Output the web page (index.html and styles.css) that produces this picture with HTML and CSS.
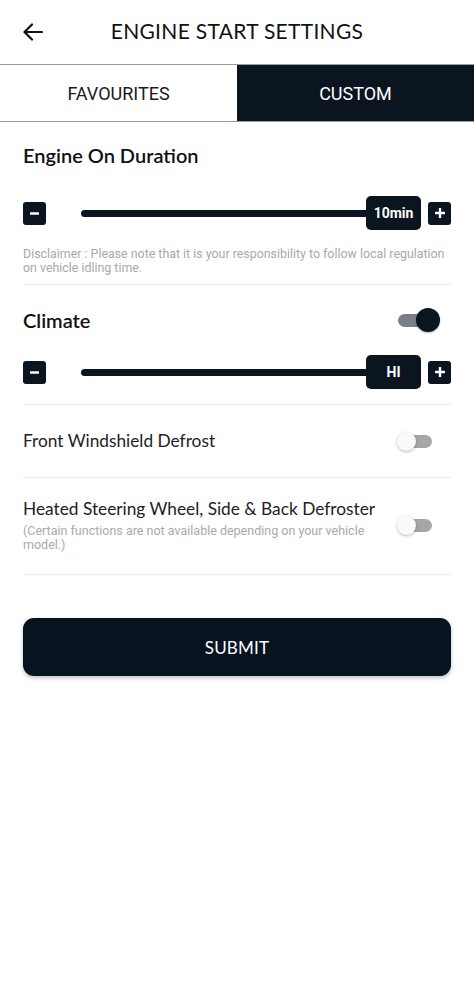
FILE: index.html
```html
<!DOCTYPE html>
<html lang="en">
<head>
<meta charset="utf-8">
<title>Engine Start Settings</title>
<link rel="stylesheet" href="styles.css">
</head>
<body>
<div class="screen">
  <header class="topbar">
    <button class="back" aria-label="Back">
      <svg width="20" height="18" viewBox="0 0 20 18" fill="none" stroke="#0a1520" stroke-width="2.2" stroke-linecap="round" stroke-linejoin="round"><path d="M19 9H2M9 1.5L1.5 9 9 16.5"/></svg>
    </button>
    <h1 class="title">ENGINE START SETTINGS</h1>
    <span></span>
  </header>

  <nav class="tabs">
    <div class="tab">FAVOURITES</div>
    <div class="tab active">CUSTOM</div>
  </nav>

  <main class="content">
    <section class="block engine">
      <h2 class="heading">Engine On Duration</h2>
      <div class="slider">
        <button class="step">
          <svg width="9" height="9" viewBox="0 0 9 9"><rect x="0" y="3.3" width="9" height="2.4" rx="0.5" fill="#fff"/></svg>
        </button>
        <div class="track-area">
          <div class="track"></div>
          <div class="thumb">10min</div>
        </div>
        <button class="step">
          <svg width="10" height="10" viewBox="0 0 10 10"><rect x="0" y="3.8" width="10" height="2.4" rx="0.5" fill="#fff"/><rect x="3.8" y="0" width="2.4" height="10" rx="0.5" fill="#fff"/></svg>
        </button>
      </div>
      <p class="note">Disclaimer : Please note that it is your responsibility to follow local regulation on vehicle idling time.</p>
    </section>

    <section class="block climate">
      <div class="row-head">
        <h2 class="heading">Climate</h2>
        <span class="toggle on"><span class="knob"></span></span>
      </div>
      <div class="slider">
        <button class="step">
          <svg width="9" height="9" viewBox="0 0 9 9"><rect x="0" y="3.3" width="9" height="2.4" rx="0.5" fill="#fff"/></svg>
        </button>
        <div class="track-area">
          <div class="track"></div>
          <div class="thumb">HI</div>
        </div>
        <button class="step">
          <svg width="10" height="10" viewBox="0 0 10 10"><rect x="0" y="3.8" width="10" height="2.4" rx="0.5" fill="#fff"/><rect x="3.8" y="0" width="2.4" height="10" rx="0.5" fill="#fff"/></svg>
        </button>
      </div>
    </section>

    <section class="option windshield">
      <div class="label">Front Windshield Defrost</div>
      <span class="toggle off"><span class="knob"></span></span>
    </section>

    <section class="option heated">
      <div class="text">
        <div class="label">Heated Steering Wheel, Side &amp; Back Defroster</div>
        <div class="sub">(Certain functions are not available depending on your vehicle model.)</div>
      </div>
      <span class="toggle off"><span class="knob"></span></span>
    </section>

    <button class="submit">SUBMIT</button>
  </main>
</div>
</body>
</html>
```

FILE: styles.css
```css
* { box-sizing: border-box; }
html, body { margin: 0; padding: 0; background: #fff; }
body { font-family: Roboto, "Liberation Sans", sans-serif; color: #0a1520; }
button { font: inherit; border: 0; padding: 0; cursor: pointer; }

.screen { width: 474px; min-height: 1001px; background: #fff; }

.topbar {
  height: 64px;
  display: grid;
  grid-template-columns: 1fr auto 1fr;
  align-items: center;
}
.back {
  background: none;
  width: 24px; height: 24px;
  margin-left: 21px;
  display: flex; align-items: center; justify-content: center;
}
.title {
  margin: 0;
  font-family: Lato, "Open Sans", sans-serif;
  font-weight: 400;
  font-size: 21px;
  letter-spacing: 0.3px;
  color: #111;
  padding-bottom: 3px;
}

.tabs {
  display: grid;
  grid-template-columns: 237px 237px;
  height: 58px;
  border-top: 1px solid #9a9a9a;
  border-bottom: 1px solid #9a9a9a;
}
.tab {
  display: flex; align-items: center; justify-content: center;
  font-size: 18px;
  color: #1a1a1a;
}
.tab.active { background: #0a1520; color: #fff; }

.content { padding: 0 23px; }

.block { border-bottom: 1px solid #ececec; }
.heading {
  margin: 0;
  font-family: Lato, "Open Sans", sans-serif;
  font-weight: 600;
  font-size: 20px;
  line-height: 24px;
  color: #111;
}
.engine { padding-top: 21px; padding-bottom: 9px; }
.engine .slider { margin-top: 29px; }

.slider {
  display: flex;
  align-items: center;
  height: 34px;
}
.step {
  width: 23px; height: 23px;
  border-radius: 3px;
  background: #0a1520;
  display: flex; align-items: center; justify-content: center;
  flex: none;
}
.track-area {
  flex: 1;
  margin: 0 7px 0 35px;
  height: 34px;
  position: relative;
  display: flex;
  align-items: center;
}
.track {
  width: 100%;
  height: 7px;
  border-radius: 4px;
  background: #0a1520;
  margin-right: 20px;
}
.thumb {
  position: absolute;
  right: 0; top: 0;
  width: 55px; height: 34px;
  border-radius: 5px;
  background: #0a1520;
  color: #fff;
  font-weight: 700;
  font-size: 14px;
  display: flex; align-items: center; justify-content: center;
}

.note {
  margin: 17px 0 0;
  font-size: 12.4px;
  line-height: 14px;
  color: #a9a9a9;
}

.climate { padding-top: 23px; padding-bottom: 15px; }
.row-head {
  display: flex;
  align-items: center;
  justify-content: space-between;
  height: 24px;
  margin-bottom: 23px;
}

.toggle {
  position: relative;
  display: block;
  width: 34px;
  height: 13px;
  border-radius: 7px;
  flex: none;
}
.toggle.on { background: #7b8087; margin-right: 19px; }
.toggle.on .knob {
  position: absolute;
  width: 24px; height: 24px;
  top: -5.5px; right: -8px;
  border-radius: 50%;
  background: #0a1520;
  box-shadow: 0 1px 2px rgba(0,0,0,0.3);
}
.toggle.off { background: #a6a6a6; margin-right: 19px; }
.toggle.off .knob {
  position: absolute;
  width: 19px; height: 19px;
  top: -3px; left: -1px;
  border-radius: 50%;
  background: #fafafa;
  box-shadow: 0 1px 3px rgba(0,0,0,0.28);
}

.option {
  display: flex;
  align-items: center;
  justify-content: space-between;
  border-bottom: 1px solid #ececec;
}
.label {
  font-family: Lato, "Open Sans", sans-serif;
  font-size: 17.3px;
  line-height: 22px;
  color: #222;
}
.windshield { height: 73px; }
.heated { padding: 20px 0 22px; }
.heated .text { width: 360px; }
.sub {
  margin-top: 4px;
  font-size: 12.5px;
  line-height: 14px;
  color: #a9a9a9;
}

.submit {
  display: flex; align-items: center; justify-content: center;
  width: 100%;
  height: 58px;
  margin-top: 43px;
  border-radius: 11px;
  background: #07141f;
  color: #fff;
  font-family: Lato, "Open Sans", sans-serif;
  font-size: 17px;
  letter-spacing: 0.2px;
  box-shadow: 0 2px 4px rgba(0,0,0,0.25);
}
```
